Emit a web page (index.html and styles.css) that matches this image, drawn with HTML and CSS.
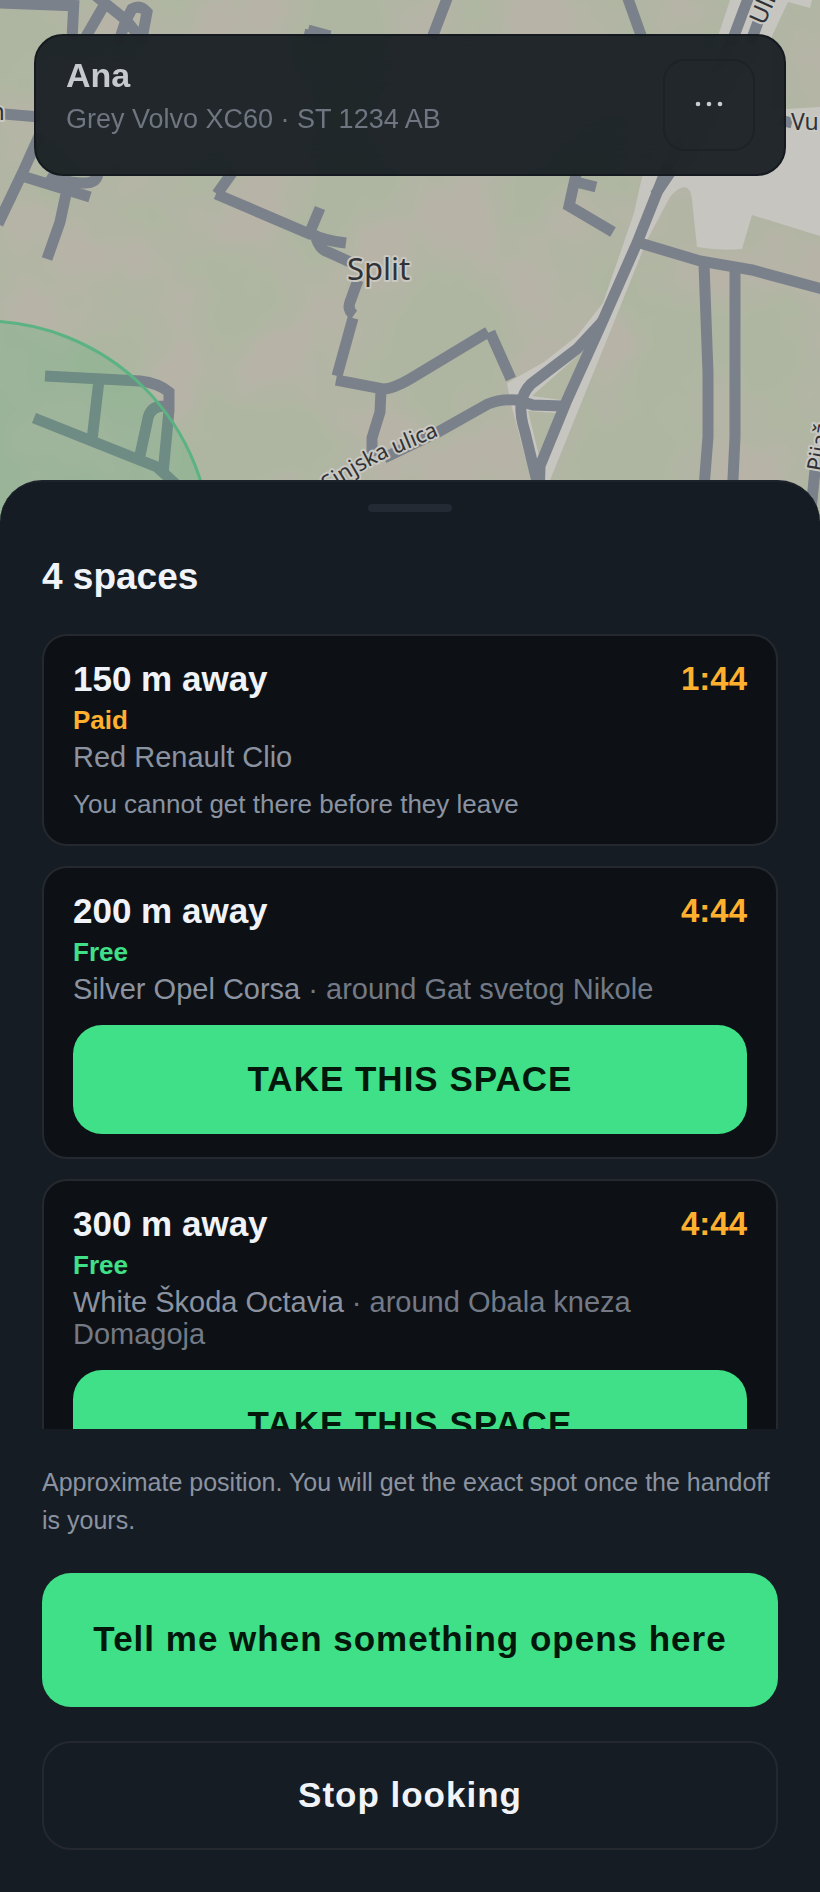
FILE: index.html
```html
<!DOCTYPE html>
<html lang="en">

<head>
    <meta charset="UTF-8">
    <meta name="viewport" content="width=device-width, initial-scale=1.0">
    <title>Parking spaces</title>
    <link rel="stylesheet" href="styles.css">
</head>

<body>

    <div class="screen">
        <svg class="map" viewBox="0 0 820 560" preserveAspectRatio="xMidYMin slice" role="img" aria-label="Map of Split">
            <defs>
                <filter id="ground" x="0" y="0" width="100%" height="100%" color-interpolation-filters="sRGB">
                    <feTurbulence type="fractalNoise" baseFrequency="0.01" numOctaves="3" seed="4" />
                    <feColorMatrix values="0 0 0 0 0.682  0 0 0 0 0.714  0 0 0 0 0.631  3 0 0 0 -0.9" />
                </filter>
                <path id="sinjska" d="M328 492 Q354 474 386 458 Q415 446 450 431" />
            </defs>
            <rect width="820" height="560" fill="#b7b4a7" />
            <rect width="820" height="560" filter="url(#ground)" />

            <!-- paved areas -->
            <g fill="#c6c5c0">
                <path d="M730 0 L718 36 L642 177 L634 213 L603 303 L577 336 L544 362 L507 383 L510 400 L534 490 L546 490 L612 327 L647 240 L670 197 Q678 187 685 187 Q691 188 692 200 L697 247 Q720 251 742 249 L752 215 L820 236 V107 L770 110 L772 36 L788 2 L810 8 L812 0 Z" />
            </g>
            <g fill="#b1b6a3">
                <path d="M584 350 L532 396 L561 400 Z" />
                <path d="M528 411 L556 413 L540 460 Z" />
            </g>

            <!-- roads -->
            <g class="roads">
                <path d="M0 3 L78 6 M74 0 L72 40 M84 40 L106 2" />
                <path d="M96 -4 L126 20 L118 44 M124 24 L132 9 Q140 4 147 12 L141 44 M126 20 L142 40" />
                <path d="M4 114 L40 117 M-2 224 L22 174 L40 134 M22 176 L90 197 M66 194 L60 222 L47 259" />
                <path d="M48 174 Q62 182 82 183 Q96 184 98 174" />
                <path d="M234 170 L217 194 M216 194 L312 235 M310 232 L320 208 M312 234 Q322 240 346 243 M316 238 Q320 250 328 252 L350 262" />
                <path d="M358 280 L350 302 Q347 310 354 315 M353 318 L337 376 M336 380 L383 389 Q393 389 410 379 L488 332 M490 332 L511 379" />
                <path d="M381 390 L380 412 L372 438 L372 456 M384 458 L438 432 L488 404 Q500 399 517 400 L533 405 L562 406" />
                <path d="M749 -4 L734 36 L666 170 L637 243 L600 327 L567 400 L540 466 L539 500" />
                <path d="M672 170 L655 195 M758 22 L750 44" />
                <path d="M602 322 L577 349 L531 384 Q523 392 521 404 Q520 416 525 432 L539 490" />
                <path d="M640 243 L700 261 L752 270 L826 290" />
                <path d="M704 264 L708 373 L708 437 L703 500 M735 270 L735 437 L732 500" />
                <path d="M577 170 L569 206 L613 232 M572 181 L596 187" />
                <path d="M448 -4 L432 38 M627 -4 L642 38 M304 34 L330 40 M308 30 L330 36 M780 120 L792 123 M815 470 L811 510" />
                <path d="M45 376 L140 381 Q158 383 169 392 L169 410 L163 474 M99 380 L92 440 M34 418 L157 467 L180 488 M166 406 Q151 405 148 418 L139 460" />
            </g>

            <circle class="search-area" cx="-17" cy="549" r="228" />

            <g class="map-labels">
                <text x="347" y="280" font-size="31">Split</text>
                <text x="791" y="130" font-size="23">Vul</text>
                <text x="-10" y="120" font-size="24">n</text>
                <text transform="translate(764 26) rotate(-66)" font-size="24">Uli</text>
                <text transform="translate(822 472) rotate(-80)" font-size="22">Pijaž</text>
                <text font-size="22"><textPath href="#sinjska">Sinjska ulica</textPath></text>
            </g>
        </svg>

        <header class="driver-card">
            <div class="driver-info">
                <h1 class="driver-name">Ana</h1>
                <p class="driver-car">Grey Volvo XC60 · ST 1234 AB</p>
            </div>
            <button class="menu-button" type="button" aria-label="Menu">
                <svg width="28" height="6" viewBox="0 0 28 6">
                    <circle cx="3" cy="3" r="2.3" />
                    <circle cx="14" cy="3" r="2.3" />
                    <circle cx="25" cy="3" r="2.3" />
                </svg>
            </button>
        </header>

        <main class="sheet">
            <div class="handle"></div>
            <h2 class="sheet-title">4 spaces</h2>

            <ul class="space-list">
                <li class="space-card">
                    <div class="space-top">
                        <h3>150 m away</h3>
                        <span class="timer">1:44</span>
                    </div>
                    <p class="price paid">Paid</p>
                    <p class="car">Red Renault Clio</p>
                    <p class="note">You cannot get there before they leave</p>
                </li>
                <li class="space-card">
                    <div class="space-top">
                        <h3>200 m away</h3>
                        <span class="timer">4:44</span>
                    </div>
                    <p class="price free">Free</p>
                    <p class="car">Silver Opel Corsa <span class="street">· around Gat svetog Nikole</span></p>
                    <button class="take-button" type="button">TAKE THIS SPACE</button>
                </li>
                <li class="space-card">
                    <div class="space-top">
                        <h3>300 m away</h3>
                        <span class="timer">4:44</span>
                    </div>
                    <p class="price free">Free</p>
                    <p class="car">White Škoda Octavia <span class="street">· around Obala kneza Domagoja</span></p>
                    <button class="take-button" type="button">TAKE THIS SPACE</button>
                </li>
            </ul>

            <p class="hint">Approximate position. You will get the exact spot once the handoff is yours.</p>
            <button class="notify-button" type="button">Tell me when something opens here</button>
            <button class="stop-button" type="button">Stop looking</button>
        </main>
    </div>

</body>

</html>
```
FILE: styles.css
```css
* {
    margin: 0;
    padding: 0;
    box-sizing: border-box;
}

body {
    font-family: "Liberation Sans", Arial, sans-serif;
    background: #161c24;
    color: #f0f3f8;
}

button {
    padding-bottom: 2px;
    font-family: inherit;
    font-weight: bold;
    font-size: 35px;
    letter-spacing: 1px;
    border: none;
    border-radius: 29px;
    cursor: pointer;
}

.screen {
    position: relative;
    height: 100vh;
    display: flex;
    flex-direction: column;
    justify-content: space-between;
    overflow: hidden;
}

/* Map behind everything */
.map {
    position: absolute;
    top: 0;
    left: 0;
    width: 100%;
    height: 560px;
}

.roads path {
    fill: none;
    stroke: #7b818a;
    stroke-width: 11;
}

.search-area {
    fill: rgba(62, 180, 110, 0.2);
    stroke: #5bb283;
    stroke-width: 3;
}

.map-labels {
    font-family: "Noto Sans", sans-serif;
    fill: #303236;
    stroke: #c9c8c2;
    stroke-width: 4px;
    stroke-linejoin: round;
    paint-order: stroke;
}

/* Driver card */
.driver-card {
    position: relative;
    display: flex;
    justify-content: space-between;
    align-items: flex-start;
    margin: 34px 34px 0;
    padding: 23px 29px 23px 30px;
    border: 2px solid #141a1f;
    border-radius: 29px;
    background: rgba(22, 28, 32, 0.93);
    backdrop-filter: blur(20px);
}

.driver-name {
    font-size: 34px;
    line-height: 32px;
    color: #c6cacf;
}

.driver-car {
    margin-top: 11px;
    font-size: 27px;
    line-height: 34px;
    color: #6f7681;
}

.menu-button {
    display: flex;
    align-items: center;
    justify-content: center;
    width: 92px;
    height: 92px;
    border: 2px solid #1c2227;
    border-radius: 22px;
    background: transparent;
    fill: #c9cdd2;
}

/* Bottom sheet */
.sheet {
    position: relative;
    display: flex;
    flex-direction: column;
    padding: 22px 42px 42px;
    border-top: 2px solid #1c232b;
    border-radius: 42px 42px 0 0;
    background: #161c24;
}

.handle {
    align-self: center;
    width: 84px;
    height: 8px;
    border-radius: 4px;
    background: #232a33;
}

.sheet-title {
    margin: 42px 0 34px;
    font-size: 37px;
    line-height: 46px;
}

.space-list {
    display: flex;
    flex-direction: column;
    gap: 20px;
    max-height: 42vh;
    overflow-y: auto;
    scrollbar-width: none;
    list-style: none;
}

.space-card {
    flex-shrink: 0;
    padding: 22px 29px 23px;
    border: 2px solid #25292f;
    border-radius: 25px;
    background: #0d1116;
}

.space-top {
    display: flex;
    justify-content: space-between;
    font-size: 33px;
    line-height: 42px;
}

.space-top h3 {
    font-size: 35px;
}

.timer {
    font-weight: bold;
    color: #ffb02e;
}

.price {
    margin-top: 4px;
    font-size: 26px;
    font-weight: bold;
    line-height: 32px;
}

.paid {
    color: #ffb02e;
}

.free {
    color: #3fe087;
}

.car {
    margin-top: 5px;
    font-size: 29px;
    line-height: 32px;
    color: #8b93a1;
}

.street {
    color: #737a86;
}

.note {
    margin-top: 14px;
    font-size: 26px;
    line-height: 34px;
    color: #8b93a1;
}

.take-button {
    display: block;
    width: 100%;
    height: 109px;
    margin-top: 20px;
    background: #3fe087;
    color: #03170b;
}

.hint {
    margin: 34px 0;
    font-size: 25px;
    line-height: 38px;
    color: #8b93a1;
}

.notify-button {
    height: 134px;
    background: #3fe087;
    color: #03170b;
}

.stop-button {
    height: 109px;
    margin-top: 34px;
    border: 2px solid #25292f;
    background: transparent;
    color: #f0f3f8;
}
```
